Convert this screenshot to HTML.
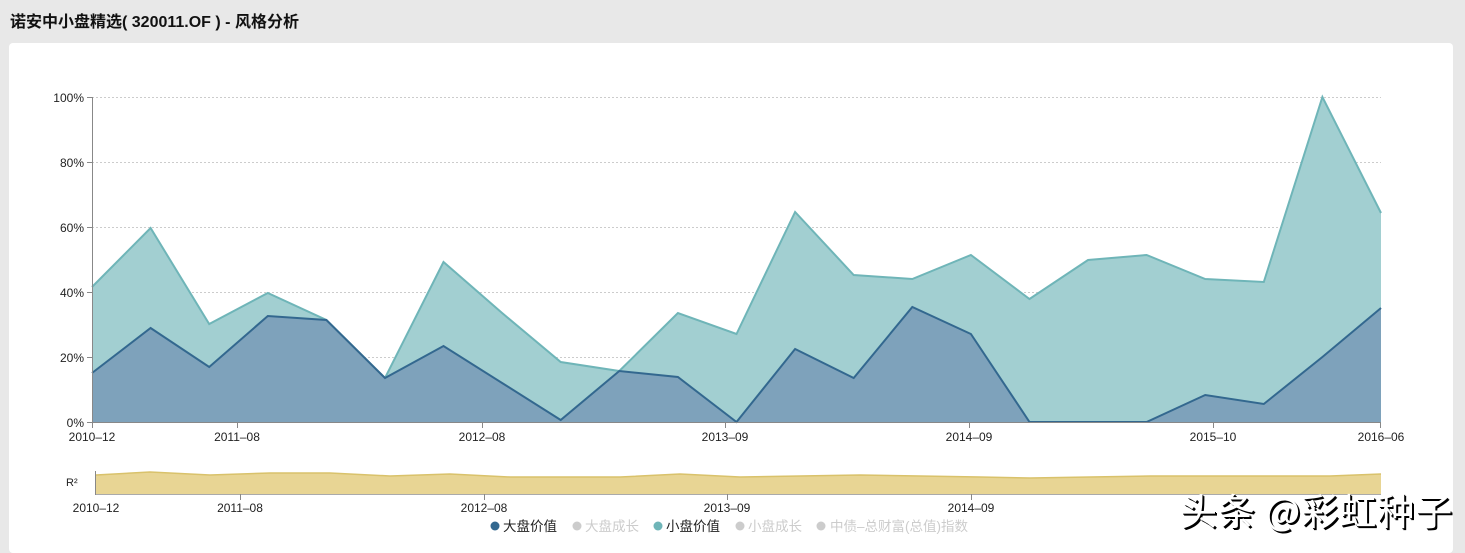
<!DOCTYPE html>
<html><head><meta charset="utf-8"><style>
html,body{margin:0;padding:0;}
body{width:1465px;height:545px;background:#e8e8e8;overflow:hidden;position:relative;font-family:"Liberation Sans","Noto Sans CJK SC",sans-serif;}
.title{position:absolute;left:10px;top:8px;font-size:16px;font-weight:bold;color:#111;}
.card{position:absolute;left:9px;top:43px;width:1444px;height:510px;background:#fff;border-radius:4px;}
svg{position:absolute;left:0;top:0;}
.wm{position:absolute;left:1180px;top:482px;font-size:37px;color:#fff;font-family:"Noto Sans CJK SC",sans-serif;text-shadow:2px 2px 0 #000,1px 1px 0 #000;letter-spacing:1px;}
</style></head><body>
<div class="title">诺安中小盘精选( 320011.OF ) - 风格分析</div>
<div class="card"></div>
<svg width="1465" height="545" font-family="Liberation Sans, Noto Sans CJK SC, sans-serif">
<g stroke="#ccc" stroke-dasharray="2,2" stroke-width="1">
<line x1="92" y1="97.5" x2="1381" y2="97.5"/>
<line x1="92" y1="162.5" x2="1381" y2="162.5"/>
<line x1="92" y1="227.5" x2="1381" y2="227.5"/>
<line x1="92" y1="292.5" x2="1381" y2="292.5"/>
<line x1="92" y1="357.5" x2="1381" y2="357.5"/>
</g>
<polygon fill="#a2cfd1" stroke="none" points="92,422 92,287 150.6,228 209.2,324 267.8,293 326.4,320 385,378 443.5,262 502.1,313 560.7,362 619.3,371 677.9,313 736.5,334 795.1,212 853.7,275 912.3,279 970.9,255 1029.5,299 1088,260 1146.6,255 1205.2,279 1263.8,282 1322.4,97 1381,213 1381,422"/>
<polyline fill="none" stroke="#6fb5b8" stroke-width="2" points="92,287 150.6,228 209.2,324 267.8,293 326.4,320 385,378 443.5,262 502.1,313 560.7,362 619.3,371 677.9,313 736.5,334 795.1,212 853.7,275 912.3,279 970.9,255 1029.5,299 1088,260 1146.6,255 1205.2,279 1263.8,282 1322.4,97 1381,213"/>
<polygon fill="#7ea2bb" points="92,422 92,373 150.6,328 209.2,367 267.8,316 326.4,320 385,378 443.5,346 502.1,383 560.7,420 619.3,371 677.9,377 736.5,422 795.1,349 853.7,378 912.3,307 970.9,334 1029.5,422 1088,422 1146.6,422 1205.2,395 1263.8,404 1322.4,357 1381,308 1381,422"/>
<polyline fill="none" stroke="#33688f" stroke-width="2" points="92,373 150.6,328 209.2,367 267.8,316 326.4,320 385,378 443.5,346 502.1,383 560.7,420 619.3,371 677.9,377 736.5,422 795.1,349 853.7,378 912.3,307 970.9,334 1029.5,422 1088,422 1146.6,422 1205.2,395 1263.8,404 1322.4,357 1381,308"/>
<g stroke="#888" stroke-width="1">
<line x1="92.5" y1="97" x2="92.5" y2="423"/>
<line x1="92" y1="422.5" x2="1381" y2="422.5"/>
<line x1="87" y1="97.5" x2="92" y2="97.5"/><line x1="87" y1="162.5" x2="92" y2="162.5"/><line x1="87" y1="227.5" x2="92" y2="227.5"/><line x1="87" y1="292.5" x2="92" y2="292.5"/><line x1="87" y1="357.5" x2="92" y2="357.5"/><line x1="87" y1="422.5" x2="92" y2="422.5"/>
<line x1="92.5" y1="422" x2="92.5" y2="428"/><line x1="237.5" y1="422" x2="237.5" y2="428"/><line x1="482.5" y1="422" x2="482.5" y2="428"/><line x1="725.5" y1="422" x2="725.5" y2="428"/><line x1="969.5" y1="422" x2="969.5" y2="428"/><line x1="1213.5" y1="422" x2="1213.5" y2="428"/><line x1="1380.5" y1="422" x2="1380.5" y2="428"/>
</g>
<g font-size="12" fill="#222" text-anchor="end">
<text x="84" y="102">100%</text><text x="84" y="167">80%</text><text x="84" y="232">60%</text><text x="84" y="297">40%</text><text x="84" y="362">20%</text><text x="84" y="427">0%</text>
</g>
<g font-size="12" fill="#222" text-anchor="middle">
<text x="92" y="441">2010–12</text><text x="237" y="441">2011–08</text><text x="482" y="441">2012–08</text><text x="725" y="441">2013–09</text><text x="969" y="441">2014–09</text><text x="1213" y="441">2015–10</text><text x="1381" y="441">2016–06</text>
</g>
<polygon fill="#e8d594" points="96,494 96,475 150,472 210,475 270,473 330,473 390,476 450,474 510,477 570,477 620,477 680,474 740,477 800,476 860,475 920,476 980,477 1030,478 1090,477 1150,476 1210,476 1270,476 1330,476 1381,474 1381,494"/>
<polyline fill="none" stroke="#d9c26b" stroke-width="1.5" points="96,475 150,472 210,475 270,473 330,473 390,476 450,474 510,477 570,477 620,477 680,474 740,477 800,476 860,475 920,476 980,477 1030,478 1090,477 1150,476 1210,476 1270,476 1330,476 1381,474"/>
<line x1="96" y1="494.5" x2="1381" y2="494.5" stroke="#aaa"/>
<line x1="95.5" y1="471" x2="95.5" y2="495" stroke="#888"/>
<g stroke="#888"><line x1="240.5" y1="494" x2="240.5" y2="500"/><line x1="484.5" y1="494" x2="484.5" y2="500"/><line x1="727.5" y1="494" x2="727.5" y2="500"/><line x1="971.5" y1="494" x2="971.5" y2="500"/></g>
<text x="66" y="486" font-size="11" fill="#222">R²</text>
<g font-size="12" fill="#222" text-anchor="middle">
<text x="96" y="512">2010–12</text><text x="240" y="512">2011–08</text><text x="484" y="512">2012–08</text><text x="727" y="512">2013–09</text><text x="971" y="512">2014–09</text>
</g>
<g font-size="13.5">
<circle cx="495" cy="526" r="4.5" fill="#33688f"/><text x="503" y="531" fill="#222">大盘价值</text>
<circle cx="577" cy="526" r="4.5" fill="#ccc"/><text x="585" y="531" fill="#ccc">大盘成长</text>
<circle cx="658" cy="526" r="4.5" fill="#6fb5b8"/><text x="666" y="531" fill="#222">小盘价值</text>
<circle cx="740" cy="526" r="4.5" fill="#ccc"/><text x="748" y="531" fill="#ccc">小盘成长</text>
<circle cx="821" cy="526" r="4.5" fill="#ccc"/><text x="830" y="531" fill="#ccc">中债–总财富(总值)指数</text>
</g>
</svg>
<div class="wm">头条 @彩虹种子</div>
</body></html>
